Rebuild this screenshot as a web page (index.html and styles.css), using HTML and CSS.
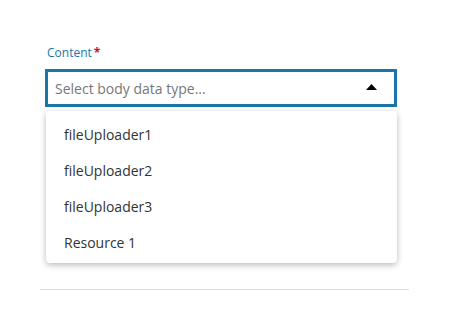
FILE: index.html
```html
<!DOCTYPE html>
<html>
<head>
<meta charset="utf-8">
<link rel="stylesheet" href="styles.css">
</head>
<body>
<div class="page">
  <div class="field">
    <label class="label">Content<span class="req">*</span></label>
    <div class="select">
      <span class="placeholder">Select body data type...</span>
      <svg class="caret" width="11" height="6" viewBox="0 0 11 6"><path d="M0 6 L5.5 0 L11 6 Z" fill="#000"/></svg>
    </div>
    <ul class="menu">
      <li class="item">fileUploader1</li>
      <li class="item">fileUploader2</li>
      <li class="item">fileUploader3</li>
      <li class="item">Resource 1</li>
    </ul>
  </div>
  <div class="spacer"></div>
  <hr class="divider">
</div>
</body>
</html>
```

FILE: styles.css
```css
html, body {
  margin: 0;
  padding: 0;
  background: #fff;
}
body {
  font-family: "Open Sans", "Noto Sans", sans-serif;
  width: 449px;
  height: 334px;
  overflow: hidden;
}
.page {
  padding: 45px 40px 0 40px;
  width: 369px;
}
.field {
  position: relative;
  margin-left: 5px;
  width: 352px;
}
.label {
  display: block;
  font-size: 12px;
  line-height: 16px;
  color: #1a76a6;
  padding-left: 2px;
  margin-bottom: 8px;
}
.req {
  color: #c8102e;
  margin-left: 2px;
  font-weight: 700;
}
.select {
  box-sizing: border-box;
  height: 38px;
  border: 3px solid #1a76a6;
  display: flex;
  align-items: center;
  justify-content: space-between;
  padding: 0 17px 0 7px;
}
.placeholder {
  font-size: 14px;
  color: #777;
}
.caret {
  display: block;
  margin-top: -2px;
}
.menu {
  position: absolute;
  left: 1px;
  top: 66px;
  width: 351px;
  margin: 0;
  padding: 6px 0 2px 0;
  list-style: none;
  background: #fff;
  border-radius: 4px;
  box-shadow: 0 2px 6px rgba(0, 0, 0, 0.28);
}
.item {
  height: 36px;
  line-height: 36px;
  padding-left: 18px;
  font-size: 14px;
  color: #333;
}
.spacer {
  height: 182px;
}
.divider {
  margin: 0;
  border: 0;
  border-top: 1px solid #ddd;
  height: 0;
}
```
